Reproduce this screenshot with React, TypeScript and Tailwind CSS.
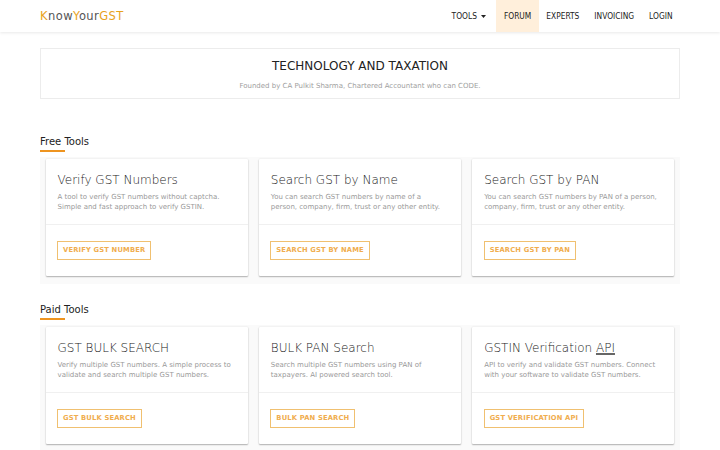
import type { ReactNode } from "react";

interface Tool {
  title: ReactNode;
  lines: string[];
  action: string;
}

const freeTools: Tool[] = [
  {
    title: "Verify GST Numbers",
    lines: ["A tool to verify GST numbers without captcha.", "Simple and fast approach to verify GSTIN."],
    action: "VERIFY GST NUMBER",
  },
  {
    title: "Search GST by Name",
    lines: ["You can search GST numbers by name of a", "person, company, firm, trust or any other entity."],
    action: "SEARCH GST BY NAME",
  },
  {
    title: "Search GST by PAN",
    lines: ["You can search GST numbers by PAN of a person,", "company, firm, trust or any other entity."],
    action: "SEARCH GST BY PAN",
  },
];

const paidTools: Tool[] = [
  {
    title: "GST BULK SEARCH",
    lines: ["Verify multiple GST numbers. A simple process to", "validate and search multiple GST numbers."],
    action: "GST BULK SEARCH",
  },
  {
    title: "BULK PAN Search",
    lines: ["Search multiple GST numbers using PAN of", "taxpayers. AI powered search tool."],
    action: "BULK PAN SEARCH",
  },
  {
    title: (
      <>
        GSTIN Verification{" "}
        <span className="underline decoration-[#666] decoration-[1.5px] underline-offset-1">API</span>
      </>
    ),
    lines: ["API to verify and validate GST numbers. Connect", "with your software to validate GST numbers."],
    action: "GST VERIFICATION API",
  },
];

function Header() {
  return (
    <header className="flex h-8 items-center justify-between bg-white px-10 shadow-[0_1px_3px_rgba(0,0,0,0.09)]">
      <div className="pt-0.5 text-[11.5px] leading-none tracking-[0.42px] text-[#555]">
        <span className="text-[#e8a31c]">K</span>now<span className="text-[#e8a31c]">Y</span>our
        <span className="text-[#e8a31c]">GST</span>
      </div>
      <nav className="flex h-full font-['DejaVu_Sans_Condensed','DejaVu_Sans'] text-[8.33px] [font-stretch:condensed] text-[#222]">
        <a className="flex items-center px-[7.5px]">
          TOOLS
          <svg className="ml-1 h-[3px] w-[5px]" viewBox="0 0 10 6">
            <path d="M0 0h10L5 6z" fill="currentColor" />
          </svg>
        </a>
        <a className="ml-[3px] flex items-center bg-[#ffefdb] px-[7.5px]">FORUM</a>
        <a className="flex items-center px-[7.5px]">EXPERTS</a>
        <a className="flex items-center px-[7.5px]">INVOICING</a>
        <a className="flex items-center px-[7.5px]">LOGIN</a>
      </nav>
    </header>
  );
}

function ToolCard({ title, lines, action }: Tool) {
  return (
    <div className="h-[117px] flex-1 rounded-[1px] bg-white shadow-[0_1px_1.5px_rgba(0,0,0,0.28),0_0_2px_rgba(0,0,0,0.1)]">
      <div className="h-[66px] border-b border-[#f0f0f0] px-3 pt-[12.5px]">
        <h3 className="font-['DejaVu_Sans_Light','DejaVu_Sans'] text-[12px] font-extralight leading-4 text-[#222]">{title}</h3>
        <p className="mt-1 whitespace-nowrap text-[7px] leading-[10.5px] text-[#999]">
          {lines[0]}
          <br />
          {lines[1]}
        </p>
      </div>
      <div className="flex px-[11.5px] pt-4">
        <button className="h-[19px] whitespace-nowrap border border-[#f0c070] px-[5px] text-[6.75px] font-bold leading-none tracking-[0.17px] text-[#f0ad4e]">
          {action}
        </button>
      </div>
    </div>
  );
}

function ToolSection({ heading, tools }: { heading: string; tools: Tool[] }) {
  return (
    <section className="h-[168px]">
      <h2 className="h-[14px] pt-[0.5px] text-[10px] leading-[14px] text-[#222]">{heading}</h2>
      <div className="mt-0.5 h-0.5 w-[25px] bg-[#ee9420]" />
      <div className="mt-[5px] flex h-[127px] gap-[11px] bg-[#fafafa] px-[5.5px] pt-[2px]">
        {tools.map((tool) => (
          <ToolCard key={tool.action} {...tool} />
        ))}
      </div>
    </section>
  );
}

export default function App() {
  return (
    <div className="h-[450px] w-[720px] overflow-hidden bg-white font-['DejaVu_Sans',sans-serif]">
      <Header />
      <main className="px-10 pt-4">
        <div className="h-[51px] border border-[#ececec] text-center">
          <h1 className="pt-2 text-[12px] leading-[18px] text-[#222]">TECHNOLOGY AND TAXATION</h1>
          <p className="mt-1 text-[7px] leading-[14px] text-[#9e9e9e]">
            Founded by CA Pulkit Sharma, Chartered Accountant who can CODE.
          </p>
        </div>
        <div className="pt-[35px]">
          <ToolSection heading="Free Tools" tools={freeTools} />
          <ToolSection heading="Paid Tools" tools={paidTools} />
        </div>
      </main>
    </div>
  );
}
